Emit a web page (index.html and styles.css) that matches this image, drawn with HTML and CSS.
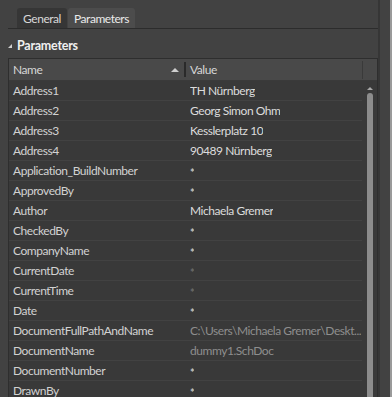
FILE: index.html
```html
<!DOCTYPE html>
<html>
<head>
<meta charset="utf-8">
<link rel="stylesheet" href="styles.css">
</head>
<body>
<div class="panel">
  <div class="tabs">
    <div class="tab">General</div>
    <div class="tab active">Parameters</div>
  </div>
  <div class="section"><span class="tri"></span>Parameters</div>
  <div class="grid">
    <div class="head">
      <div class="hname">Name<span class="sort"></span></div>
      <div class="hsep"></div>
      <div class="hval">Value</div>
      <div class="hend"></div>
    </div>
    <div class="body">
      <div class="rows">
        <div class="row"><span class="n">Address1</span><span class="v">TH Nürnberg</span></div>
        <div class="row"><span class="n">Address2</span><span class="v">Georg Simon Ohm</span></div>
        <div class="row"><span class="n">Address3</span><span class="v">Kesslerplatz 10</span></div>
        <div class="row"><span class="n">Address4</span><span class="v">90489 Nürnberg</span></div>
        <div class="row"><span class="n">Application_BuildNumber</span><span class="v star">*</span></div>
        <div class="row"><span class="n">ApprovedBy</span><span class="v star">*</span></div>
        <div class="row"><span class="n">Author</span><span class="v">Michaela Gremer</span></div>
        <div class="row"><span class="n">CheckedBy</span><span class="v star">*</span></div>
        <div class="row"><span class="n">CompanyName</span><span class="v star">*</span></div>
        <div class="row"><span class="n">CurrentDate</span><span class="v star dim">*</span></div>
        <div class="row"><span class="n">CurrentTime</span><span class="v star dim">*</span></div>
        <div class="row"><span class="n">Date</span><span class="v star">*</span></div>
        <div class="row"><span class="n">DocumentFullPathAndName</span><span class="v gray">C:\Users\Michaela Gremer\Deskt...</span></div>
        <div class="row"><span class="n">DocumentName</span><span class="v gray">dummy1.SchDoc</span></div>
        <div class="row"><span class="n">DocumentNumber</span><span class="v star">*</span></div>
        <div class="row"><span class="n">DrawnBy</span><span class="v star">*</span></div>
      </div>
      <div class="scroll">
        <span class="up"></span>
        <span class="thumb"></span>
      </div>
    </div>
  </div>
</div>
<div class="edge"></div>
</body>
</html>
```
FILE: styles.css
```css
html, body {
  margin: 0;
  padding: 0;
  height: 100%;
  overflow: hidden;
}
body {
  background: #424242;
  font-family: Lato, "Open Sans", sans-serif;
  font-size: 12px;
  letter-spacing: -0.45px;
  color: #d6d6d6;
  display: flex;
}
.panel {
  width: 378px;
  display: flex;
  flex-direction: column;
}
.tabs {
  margin-left: 8px;
  padding: 8px 0 0 9px;
  display: flex;
  gap: 1px;
  border-bottom: 1px solid #2c2c2c;
  flex: none;
}
.tab {
  height: 20px;
  line-height: 21px;
  padding: 0 6px;
  background: #363636;
  border-radius: 3px 3px 0 0;
  color: #d8d8d8;
  font-size: 12px;
}
.tab.active {
  background: #4c4c4c;
  color: #eaeaea;
}
.section {
  height: 29px;
  flex: none;
  box-sizing: border-box;
  padding: 3px 0 0 8px;
  display: flex;
  align-items: center;
  font-weight: bold;
  font-size: 12.5px;
  letter-spacing: -0.25px;
  color: #f0f0f0;
}
.tri {
  width: 0;
  height: 0;
  border-left: 4px solid transparent;
  border-bottom: 4px solid #cfcfcf;
  margin-right: 5px;
  margin-top: 1px;
}
.grid {
  margin-left: 8px;
  border: 1px solid #2e2e2e;
  border-bottom: none;
  flex: 1;
  display: flex;
  flex-direction: column;
  background: #393939;
}
.head {
  height: 21px;
  flex: none;
  background: #494949;
  display: flex;
  align-items: center;
  border-bottom: 1px solid #3a3a3a;
}
.hname {
  width: 172px;
  padding-left: 4px;
  box-sizing: border-box;
  display: flex;
  align-items: center;
  justify-content: space-between;
  color: #d6d6d6;
}
.sort {
  width: 0;
  height: 0;
  border-left: 4px solid transparent;
  border-right: 4px solid transparent;
  border-bottom: 4px solid #cfcfcf;
  margin-right: 2px;
}
.hsep {
  width: 2px;
  height: 15px;
  background: #2a2a2a;
  margin: 0 4px 0 3px;
}
.hval {
  flex: 1;
  color: #d6d6d6;
}
.hend {
  width: 1px;
  height: 18px;
  background: #3a3a3a;
  margin-right: 14px;
}
.body {
  flex: 1;
  display: flex;
}
.rows {
  width: 354px;
}
.row {
  height: 20px;
  box-sizing: border-box;
  border-bottom: 1px solid #424242;
  display: flex;
  align-items: center;
  white-space: nowrap;
}
.n {
  width: 181px;
  flex: none;
  box-sizing: border-box;
  padding-left: 4px;
  color: #d2d2d2;
}
.v {
  color: #dcdcdc;
  overflow: hidden;
  min-width: 0;
}
.v.gray {
  color: #8e8e8e;
}
.v.star {
  font-size: 11px;
  font-weight: bold;
  color: #c4c4c4;
  margin-top: 3px;
}
.v.star.dim {
  color: #6a6a6a;
}
.scroll {
  width: 15px;
  display: flex;
  flex-direction: column;
  align-items: center;
  padding-top: 6px;
  gap: 3px;
}
.up {
  width: 0;
  height: 0;
  border-left: 3px solid transparent;
  border-right: 3px solid transparent;
  border-bottom: 3px solid #a8a8a8;
}
.thumb {
  width: 6px;
  flex: 1;
  background: #8c8c8c;
  border-radius: 3px 3px 0 0;
}
.edge {
  flex: 1;
  display: flex;
  justify-content: flex-end;
  border-left: 2px solid #363636;
}
.edge::after {
  content: "";
  width: 2px;
  background: #9a9a9a;
}
```
